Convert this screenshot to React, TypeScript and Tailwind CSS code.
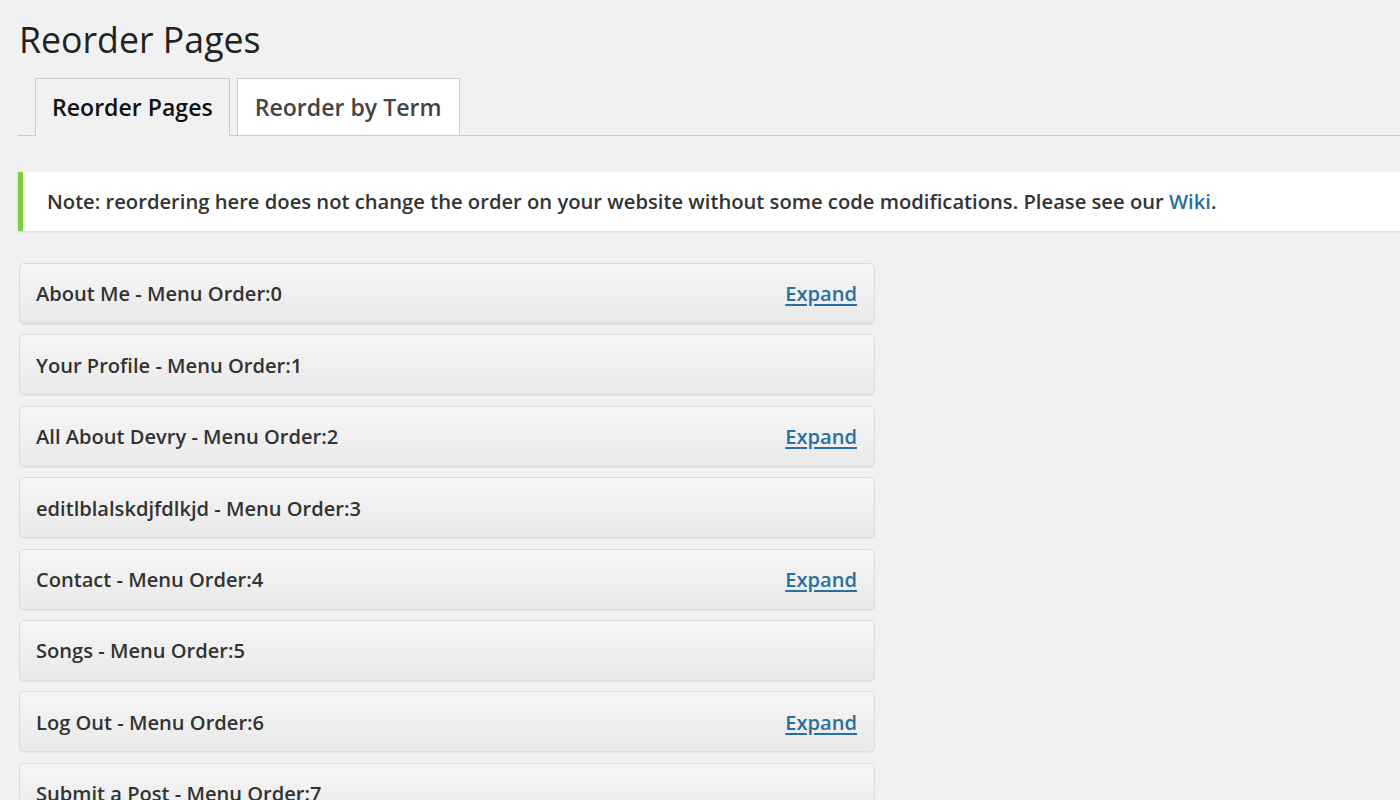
const pages = [
  { title: "About Me", order: 0, expand: true },
  { title: "Your Profile", order: 1, expand: false },
  { title: "All About Devry", order: 2, expand: true },
  { title: "editlblalskdjfdlkjd", order: 3, expand: false },
  { title: "Contact", order: 4, expand: true },
  { title: "Songs", order: 5, expand: false },
  { title: "Log Out", order: 6, expand: true },
  { title: "Submit a Post", order: 7, expand: false },
]

const App = () => {
  return (
    <div className="w-[1400px] h-[800px] overflow-hidden bg-[#f1f1f1] font-['Open_Sans',sans-serif] text-[#222]">
      {/* page title */}
      <h1 className="pl-[19px] pt-[14px] text-[35.7px] leading-[50px] font-normal text-[#222]">
        Reorder Pages
      </h1>

      {/* tabs */}
      <div className="flex items-end gap-[7px] ml-[18px] mt-[14px] pl-[17px] border-b border-[#ccc] h-[58px]">
        <div className="h-[58px] px-[16px] flex items-center border border-b-0 border-[#ccc] bg-[#f1f1f1] text-[23.1px] font-semibold text-[#111] -mb-px">
          Reorder Pages
        </div>
        <div className="h-[57px] px-[17px] flex items-center border border-b-0 border-[#ccc] bg-white text-[23.1px] font-semibold text-[#444]">
          Reorder by Term
        </div>
      </div>

      {/* notice */}
      <div className="ml-[18px] mt-[36px] h-[59px] flex items-center bg-white border-l-[5px] border-[#7ad03a] shadow-[0_1px_2px_rgba(0,0,0,0.12)] pl-[24px] text-[20.2px] font-semibold text-[#333]">
        <span>
          Note: reordering here does not change the order on your website without some code modifications. Please see our{" "}
          <a className="text-[#2a6f9e]">Wiki</a>.
        </span>
      </div>

      {/* page list */}
      <div className="mt-[32px] ml-[19px] w-[856px] flex flex-col gap-[10.4px]">
        {pages.map((p) => (
          <div
            key={p.order}
            className="h-[61px] shrink-0 flex items-center justify-between rounded-[5px] border border-[#dcdcdc] bg-gradient-to-b from-[#f6f6f6] to-[#e9e9e9] shadow-[0_1px_1px_rgba(0,0,0,0.05)] pl-[16px] pr-[17px]"
          >
            <span className="text-[20.1px] font-semibold text-[#333] pt-[2px]">
              {p.title} - Menu Order:{p.order}
            </span>
            {p.expand && (
              <a className="text-[20.1px] font-semibold text-[#2a6f9e] underline underline-offset-[3px] pt-[2px]">Expand</a>
            )}
          </div>
        ))}
      </div>
    </div>
  )
}

export default App
